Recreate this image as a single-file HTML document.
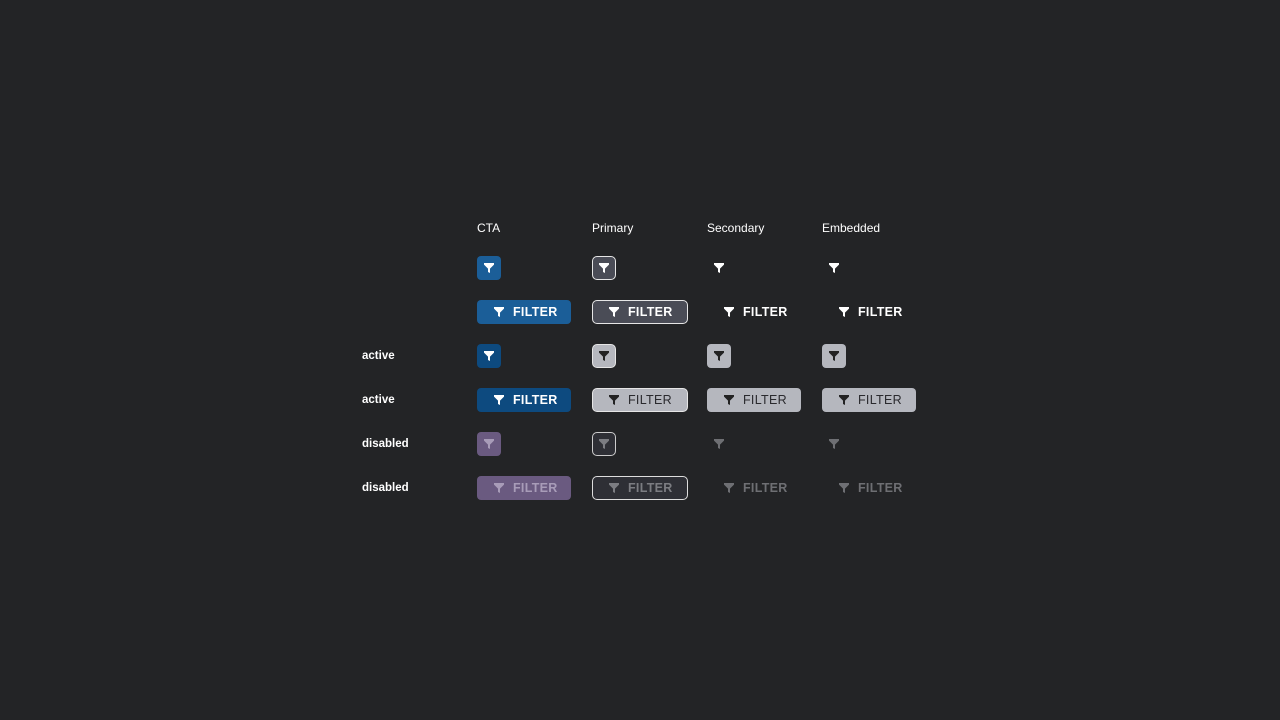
<!DOCTYPE html>
<html><head><style>
body{margin:0;background:#232426;width:1280px;height:720px;position:relative;font-family:"Liberation Sans",sans-serif;overflow:hidden}
.h{position:absolute;top:221px;color:#fff;font-size:12px}
.l{position:absolute;left:362px;color:#fff;font-size:11.5px;font-weight:bold}
.b{position:absolute;height:24px;box-sizing:border-box;border-radius:4px}
.i{width:24px}.t{width:94px}
.b svg{position:absolute;left:7px;top:7px;width:10px;height:10px}
.t svg{left:17px}
.t span{position:absolute;left:36px;top:5px;font-size:12.5px;font-weight:bold;letter-spacing:.3px;line-height:14px}
.bd{border:1px solid #e6e6e6;border-radius:5px}
.bd svg{left:6px;top:6px}.t.bd{width:96px}.t.bd svg{left:16px}.t.bd span{left:35px;top:4px}
</style></head><body>
<svg width="0" height="0" style="position:absolute"><defs><path id="f" d="M0 0H10V1.6L6 5.6V10L4 9V5.6L0 1.6Z"/></defs></svg>
<div class="h" style="left:477px">CTA</div>
<div class="h" style="left:592px">Primary</div>
<div class="h" style="left:707px">Secondary</div>
<div class="h" style="left:822px">Embedded</div>
<div class="l" style="top:350px">active</div>
<div class="l" style="top:394px">active</div>
<div class="l" style="top:438px">disabled</div>
<div class="l" style="top:482px">disabled</div>

<div class="b i" style="left:477px;top:256px;background:#1b5e98"><svg fill="#fff"><use href="#f"/></svg></div>
<div class="b i bd" style="left:592px;top:256px;background:#4a4c56"><svg fill="#fff"><use href="#f"/></svg></div>
<div class="b i" style="left:707px;top:256px"><svg fill="#fff"><use href="#f"/></svg></div>
<div class="b i" style="left:822px;top:256px"><svg fill="#fff"><use href="#f"/></svg></div>

<div class="b t" style="left:477px;top:300px;background:#1b5e98;color:#fff"><svg fill="#fff"><use href="#f"/></svg><span>FILTER</span></div>
<div class="b t bd" style="left:592px;top:300px;background:#4a4c56;color:#fff"><svg fill="#fff"><use href="#f"/></svg><span>FILTER</span></div>
<div class="b t" style="left:707px;top:300px;color:#fff"><svg fill="#fff"><use href="#f"/></svg><span>FILTER</span></div>
<div class="b t" style="left:822px;top:300px;color:#fff"><svg fill="#fff"><use href="#f"/></svg><span>FILTER</span></div>

<div class="b i" style="left:477px;top:344px;background:#0d4a7f"><svg fill="#fff"><use href="#f"/></svg></div>
<div class="b i bd" style="left:592px;top:344px;background:#b5b7be"><svg fill="#222"><use href="#f"/></svg></div>
<div class="b i" style="left:707px;top:344px;background:#b5b7be"><svg fill="#222"><use href="#f"/></svg></div>
<div class="b i" style="left:822px;top:344px;background:#b5b7be"><svg fill="#222"><use href="#f"/></svg></div>

<div class="b t" style="left:477px;top:388px;background:#0d4a7f;color:#fff"><svg fill="#fff"><use href="#f"/></svg><span>FILTER</span></div>
<div class="b t bd" style="left:592px;top:388px;background:#b5b7be;color:#2a2a2e"><svg fill="#222"><use href="#f"/></svg><span style="font-weight:normal">FILTER</span></div>
<div class="b t" style="left:707px;top:388px;background:#b5b7be;color:#2a2a2e"><svg fill="#222"><use href="#f"/></svg><span style="font-weight:normal">FILTER</span></div>
<div class="b t" style="left:822px;top:388px;background:#b5b7be;color:#2a2a2e"><svg fill="#222"><use href="#f"/></svg><span style="font-weight:normal">FILTER</span></div>

<div class="b i" style="left:477px;top:432px;background:#6a5a80"><svg fill="#a89cb8"><use href="#f"/></svg></div>
<div class="b i bd" style="left:592px;top:432px;background:#2e2f35;border-color:#ccc"><svg fill="#7c7d82"><use href="#f"/></svg></div>
<div class="b i" style="left:707px;top:432px"><svg fill="#6e6f73"><use href="#f"/></svg></div>
<div class="b i" style="left:822px;top:432px"><svg fill="#6e6f73"><use href="#f"/></svg></div>

<div class="b t" style="left:477px;top:476px;background:#6a5a80;color:#a89cb8"><svg fill="#a89cb8"><use href="#f"/></svg><span>FILTER</span></div>
<div class="b t bd" style="left:592px;top:476px;background:#2e2f35;border-color:#ddd;color:#7c7d82"><svg fill="#7c7d82"><use href="#f"/></svg><span>FILTER</span></div>
<div class="b t" style="left:707px;top:476px;color:#6e6f73"><svg fill="#6e6f73"><use href="#f"/></svg><span>FILTER</span></div>
<div class="b t" style="left:822px;top:476px;color:#6e6f73"><svg fill="#6e6f73"><use href="#f"/></svg><span>FILTER</span></div>
</body></html>
